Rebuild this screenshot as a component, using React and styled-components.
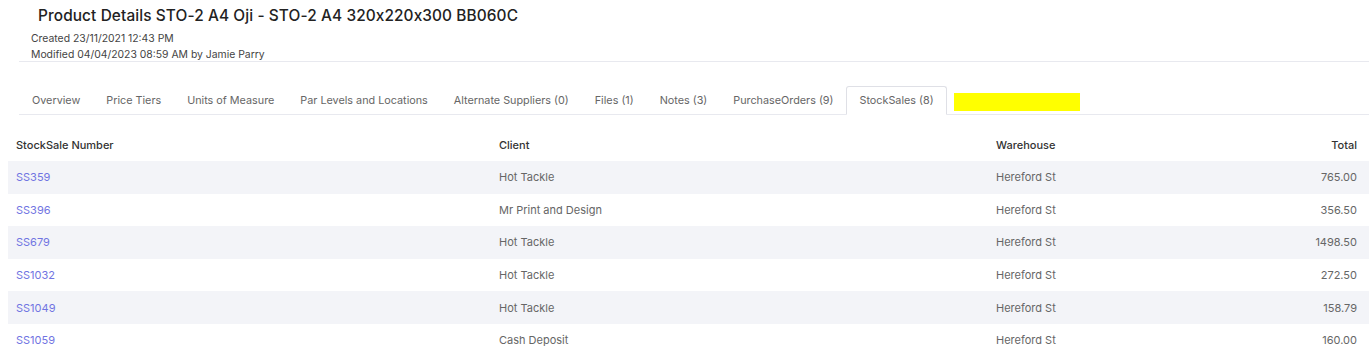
import React from "react";
import styled, { createGlobalStyle } from "styled-components";

const GlobalStyle = createGlobalStyle`
  body {
    margin: 8px 0 0 8px;
    background: #fff;
    font-family: Inter, "Noto Sans", sans-serif;
    color: #555;
  }
`;

const tabs = [
  "Overview",
  "Price Tiers",
  "Units of Measure",
  "Par Levels and Locations",
  "Alternate Suppliers (0)",
  "Files (1)",
  "Notes (3)",
  "PurchaseOrders (9)",
  "StockSales (8)",
];

const rows = [
  { no: "SS359", client: "Hot Tackle", warehouse: "Hereford St", total: "765.00" },
  { no: "SS396", client: "Mr Print and Design", warehouse: "Hereford St", total: "356.50" },
  { no: "SS679", client: "Hot Tackle", warehouse: "Hereford St", total: "1498.50" },
  { no: "SS1032", client: "Hot Tackle", warehouse: "Hereford St", total: "272.50" },
  { no: "SS1049", client: "Hot Tackle", warehouse: "Hereford St", total: "158.79" },
  { no: "SS1059", client: "Cash Deposit", warehouse: "Hereford St", total: "160.00" },
];

export default function App() {
  return (
    <>
      <GlobalStyle />
      <Header>
        <Title>Product Details STO-2 A4 Oji - STO-2 A4 320x220x300 BB060C</Title>
        <Meta>Created 23/11/2021 12:43 PM</Meta>
        <Meta>Modified 04/04/2023 08:59 AM by Jamie Parry</Meta>
      </Header>
      <Tabs>
        {tabs.map((t) => (
          <Tab key={t} $active={t === "StockSales (8)"}>
            {t}
          </Tab>
        ))}
        <Tab $marker>
          <Marker />
        </Tab>
      </Tabs>
      <Table>
        <HeadRow>
          <Cell>StockSale Number</Cell>
          <Cell>Client</Cell>
          <Cell>Warehouse</Cell>
          <Cell $right>Total</Cell>
        </HeadRow>
        {rows.map((r, i) => (
          <Row key={r.no} $striped={i % 2 === 0}>
            <Cell>
              <Link href="#">{r.no}</Link>
            </Cell>
            <Cell>{r.client}</Cell>
            <Cell>{r.warehouse}</Cell>
            <Cell $right>{r.total}</Cell>
          </Row>
        ))}
      </Table>
    </>
  );
}

const Header = styled.div`
  display: flex;
  flex-direction: column;
  margin-left: 11px;
  padding: 0 0 0 12px;
  border-bottom: 1px solid #e8e9ef;
  height: 53px;
`;

const Title = styled.h1`
  margin: -4px 0 3px 7px;
  font-size: 15.4px;
  font-weight: 500;
  color: #222;
  line-height: 24px;
  letter-spacing: 0.1px;
`;

const Meta = styled.div`
  font-size: 10.4px;
  line-height: 16px;
  color: #444;
`;

const Tabs = styled.div`
  display: flex;
  margin: 24px 0 0 11px;
  border-bottom: 1px solid #e8e9ef;
  height: 28px;
`;

const Tab = styled.div`
  display: flex;
  align-items: center;
  padding: 0 ${(p) => (p.$marker ? "6px" : "12px")};
  font-size: 10.8px;
  color: #666;
  white-space: nowrap;
  border: 1px solid ${(p) => (p.$active ? "#dfe0e6" : "transparent")};
  border-bottom-color: ${(p) => (p.$active ? "#fff" : "transparent")};
  border-radius: 3px 3px 0 0;
  background: ${(p) => (p.$active ? "#fff" : "transparent")};
  margin-bottom: -1px;
`;

const Marker = styled.span`
  display: block;
  width: 126px;
  height: 18px;
  margin-top: 2px;
  background: #ffff00;
`;

const Table = styled.div`
  margin-top: 14px;
`;

const HeadRow = styled.div`
  display: grid;
  grid-template-columns: 483px 497px 1fr 160px;
  height: 32px;
  align-items: center;
  font-size: 11px;
  font-weight: 500;
  color: #333;
`;

const Row = styled(HeadRow)`
  height: 32.6px;
  font-weight: 400;
  color: #666;
  background: ${(p) => (p.$striped ? "#f3f4f8" : "#fff")};
`;

const Cell = styled.div`
  padding: ${(p) => (p.$right ? "0 12px 0 8px" : "0 8px")};
  text-align: ${(p) => (p.$right ? "right" : "left")};
  white-space: nowrap;
`;

const Link = styled.a`
  color: #7174e2;
  text-decoration: none;
`;
